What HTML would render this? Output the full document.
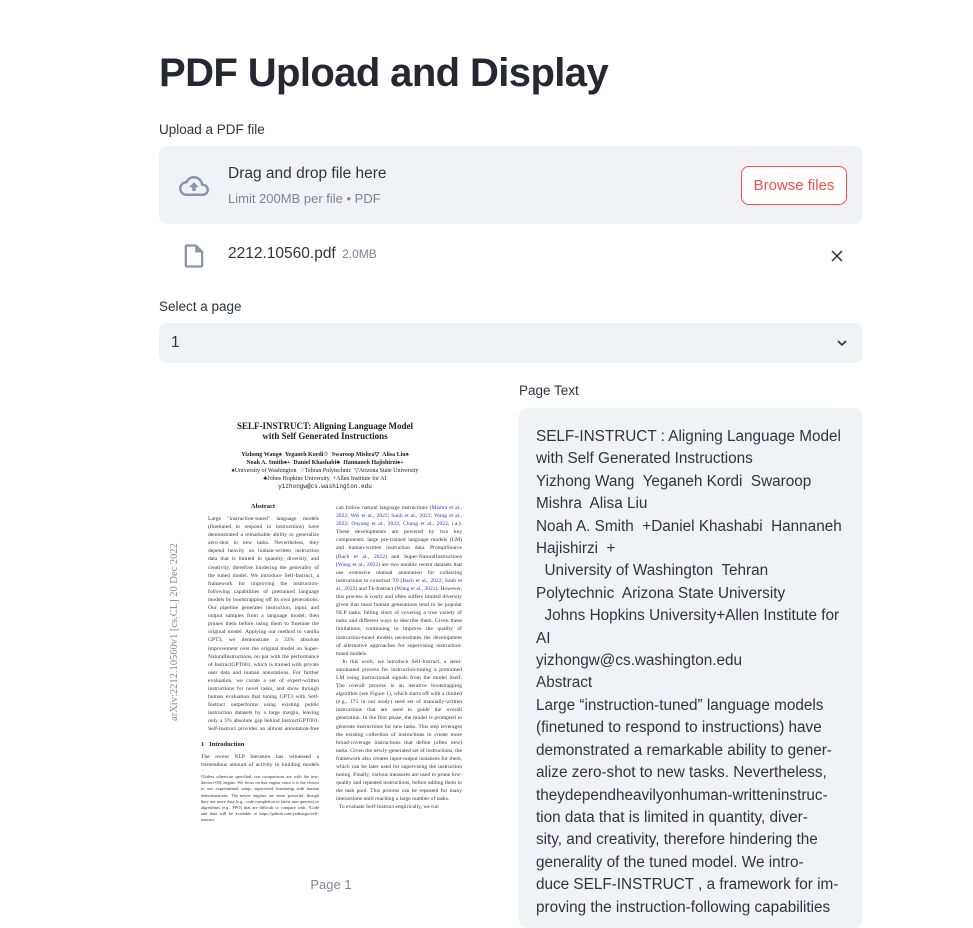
<!DOCTYPE html>
<html><head><meta charset="utf-8"><style>
*{box-sizing:border-box;margin:0;padding:0}
body{width:973px;height:907px;overflow:hidden;background:#fff;font-family:"Liberation Sans",sans-serif;color:#31333f;position:relative}
.a{position:absolute}
h1{position:absolute;left:159px;top:51px;font-size:40px;font-weight:700;color:#262730;letter-spacing:-0.6px}
.lbl{font-size:13.5px;color:#31333f}
.drop{left:159px;top:146px;width:704px;height:78px;background:#f0f2f6;border-radius:8px}
.btn{left:741px;top:166px;width:106px;height:39px;border:1px solid #ff4b4b;border-radius:8px;background:#fff;color:#ff4b4b;font-size:15px;text-align:center;line-height:37px}
.sel{left:159px;top:323px;width:704px;height:40px;background:#f0f2f6;border-radius:8px}
.tbox{left:519px;top:408px;width:344px;height:520px;background:#f0f2f6;border-radius:8px;padding:18px 17px;font-size:15.3px;line-height:22.4px;color:#31333f;white-space:nowrap;overflow:hidden}
.pdf{font-family:"Liberation Serif",serif;color:#222}
.col{position:absolute;font-size:5.6px;line-height:8.1px;text-align:justify;color:#333}
</style></head><body>
<h1>PDF Upload and Display</h1>
<div class="a lbl" style="left:159px;top:122px">Upload a PDF file</div>
<div class="a drop"></div>
<svg class="a" style="left:175px;top:171px" width="38" height="30" viewBox="0 0 24 24"><path d="M19.35 10.04A7.49 7.490 0 0 0 12 4C9.11 4 6.6 5.64 5.350 8.04A5.994 5.994 0 0 0 0 14c0 3.31 2.69 6 6 6h13c2.76 0 5-2.24 5-5 0-2.640-2.05-4.780-4.65-4.96zM19 18H6c-2.21 0-4-1.79-4-4 0-2.05 1.53-3.76 3.56-3.97l1.07-.11.5-.95A5.47 5.47 0 0 1 12 6c2.62 0 4.88 1.86 5.39 4.43l.3 1.5 1.53.11A2.98 2.98 0 0 1 22 15c0 1.65-1.35 3-3 3zM8 13h2.55v3h2.9v-3H16l-4-4z" fill="#8b95b0"/></svg>
<div class="a" style="left:228px;top:165px;font-size:15.5px;color:#31333f">Drag and drop file here</div>
<div class="a" style="left:228px;top:191px;font-size:13px;color:#808495">Limit 200MB per file • PDF</div>
<div class="a btn">Browse files</div>
<svg class="a" style="left:180px;top:242px" width="28" height="28" viewBox="0 0 24 24"><path d="M14 2H6c-1.1 0-2 .9-2 2v16c0 1.1.9 2 2 2h12c1.1 0 2-.9 2-2V8l-6-6zM6 20V4h7v5h5v11H6z" fill="#8b95b0"/></svg>
<div class="a" style="left:228px;top:245px;font-size:15.5px">2212.10560.pdf <span style="font-size:12px;color:#808495;margin-left:2px">2.0MB</span></div>
<svg class="a" style="left:830px;top:249px" width="14" height="14" viewBox="0 0 14 14"><path d="M2 2L12 12M12 2L2 12" stroke="#31333f" stroke-width="1.5"/></svg>
<div class="a lbl" style="left:159px;top:299px">Select a page</div>
<div class="a sel"></div>
<div class="a" style="left:171px;top:334px;font-size:15.5px">1</div>
<svg class="a" style="left:836px;top:338px" width="12" height="10" viewBox="0 0 12 10"><path d="M2 3L6 7L10 3" stroke="#31333f" stroke-width="1.6" fill="none"/></svg>
<div class="a lbl" style="left:519px;top:383px">Page Text</div>
<div class="a tbox">SELF-INSTRUCT : Aligning Language Model<br>with Self Generated Instructions<br>Yizhong Wang&nbsp; Yeganeh Kordi&nbsp; Swaroop<br>Mishra&nbsp; Alisa Liu<br>Noah A. Smith&nbsp; +Daniel Khashabi&nbsp; Hannaneh<br>Hajishirzi&nbsp; +<br>&nbsp; University of Washington&nbsp; Tehran<br>Polytechnic&nbsp; Arizona State University<br>&nbsp; Johns Hopkins University+Allen Institute for<br>AI<br>yizhongw@cs.washington.edu<br>Abstract<br>Large “instruction-tuned” language models<br>(finetuned to respond to instructions) have<br>demonstrated a remarkable ability to gener-<br>alize zero-shot to new tasks. Nevertheless,<br>theydependheavilyonhuman-writteninstruc-<br>tion data that is limited in quantity, diver-<br>sity, and creativity, therefore hindering the<br>generality of the tuned model. We intro-<br>duce SELF-INSTRUCT , a framework for im-<br>proving the instruction-following capabilities</div>

<div class="pdf">
<div class="a" style="left:160px;top:421px;width:330px;text-align:center;font-size:9px;font-weight:700;line-height:10px">SELF-INSTRUCT: Aligning Language Model<br>with Self Generated Instructions</div>
<div class="a" style="left:160px;top:451px;width:330px;text-align:center;font-size:6px;line-height:8px"><b>Yizhong Wang♠ &nbsp;Yeganeh Kordi♢ &nbsp;Swaroop Mishra▽ &nbsp;Alisa Liu♠<br>Noah A. Smith♠+ &nbsp;Daniel Khashabi♣ &nbsp;Hannaneh Hajishirzi♠+</b><br>♠University of Washington &nbsp;♢Tehran Polytechnic &nbsp;▽Arizona State University<br>♣Johns Hopkins University &nbsp;+Allen Institute for AI<br><span style="font-family:'Liberation Mono',monospace">yizhongw@cs.washington.edu</span></div>
<div class="a" style="left:208px;top:503px;width:110px;text-align:center;font-size:6.5px;font-weight:700">Abstract</div>
<div class="a" style="left:70px;top:625px;width:210px;height:14px;line-height:14px;transform:rotate(-90deg);transform-origin:center;font-size:10.5px;color:#888;white-space:nowrap;text-align:center">arXiv:2212.10560v1 [cs.CL] 20 Dec 2022</div>
<div class="col" style="left:208px;top:515px;width:111px;height:219px;overflow:hidden">Large "instruction-tuned" language models (finetuned to respond to instructions) have demonstrated a remarkable ability to generalize zero-shot to new tasks. Nevertheless, they depend heavily on human-written instruction data that is limited in quantity, diversity, and creativity, therefore hindering the generality of the tuned model. We introduce Self-Instruct, a framework for improving the instruction-following capabilities of pretrained language models by bootstrapping off its own generations. Our pipeline generates instruction, input, and output samples from a language model, then prunes them before using them to finetune the original model. Applying our method to vanilla GPT3, we demonstrate a 33% absolute improvement over the original model on Super-NaturalInstructions, on par with the performance of InstructGPT001, which is trained with private user data and human annotations. For further evaluation, we curate a set of expert-written instructions for novel tasks, and show through human evaluation that tuning GPT3 with Self-Instruct outperforms using existing public instruction datasets by a large margin, leaving only a 5% absolute gap behind InstructGPT001. Self-Instruct provides an almost annotation-free method for aligning pretrained language models with instructions.</div>
<div class="a" style="left:201px;top:741px;font-size:6.5px;font-weight:700">1 &nbsp; Introduction</div>
<div class="col" style="left:201px;top:753px;width:118px;height:18px;overflow:hidden">The recent NLP literature has witnessed a tremendous amount of activity in building models that</div>
<div class="col" style="left:201px;top:774px;width:118px;height:55px;overflow:hidden;font-size:4.4px;line-height:6.2px">¹Unless otherwise specified, our comparisons are with the text-davinci-001 engine. We focus on this engine since it is the closest to our experimental setup: supervised finetuning with human demonstrations. The newer engines are more powerful, though they use more data (e.g., code completion or latest user queries) or algorithms (e.g., PPO) that are difficult to compare with. ²Code and data will be available at https://github.com/yizhongw/self-instruct.</div>
<div class="col" style="left:336px;top:504px;width:126px;height:325px;overflow:hidden">can follow natural language instructions (<span style="color:#33c">Mishra et al., 2022; Wei et al., 2022; Sanh et al., 2022; Wang et al., 2022; Ouyang et al., 2022; Chung et al., 2022</span>, i.a.). These developments are powered by two key components: large pre-trained language models (LM) and human-written instruction data. PromptSource (<span style="color:#33c">Bach et al., 2022</span>) and Super-NaturalInstructions (<span style="color:#33c">Wang et al., 2022</span>) are two notable recent datasets that use extensive manual annotation for collecting instructions to construct T0 (<span style="color:#33c">Bach et al., 2022; Sanh et al., 2022</span>) and Tk-Instruct (<span style="color:#33c">Wang et al., 2022</span>). However, this process is costly and often suffers limited diversity given that most human generations tend to be popular NLP tasks, falling short of covering a true variety of tasks and different ways to describe them. Given these limitations, continuing to improve the quality of instruction-tuned models necessitates the development of alternative approaches for supervising instruction-tuned models.<br>&nbsp;&nbsp;In this work, we introduce Self-Instruct, a semi-automated process for instruction-tuning a pretrained LM using instructional signals from the model itself. The overall process is an iterative bootstrapping algorithm (see Figure 1), which starts off with a limited (e.g., 175 in our study) seed set of manually-written instructions that are used to guide the overall generation. In the first phase, the model is prompted to generate instructions for new tasks. This step leverages the existing collection of instructions to create more broad-coverage instructions that define (often new) tasks. Given the newly-generated set of instructions, the framework also creates input-output instances for them, which can be later used for supervising the instruction tuning. Finally, various measures are used to prune low-quality and repeated instructions, before adding them to the task pool. This process can be repeated for many interactions until reaching a large number of tasks.<br>&nbsp;&nbsp;To evaluate Self-Instruct empirically, we run</div>
</div>
<div class="a" style="left:160px;top:877px;width:342px;text-align:center;font-size:13px;color:#808495">Page 1</div>
</body></html>
